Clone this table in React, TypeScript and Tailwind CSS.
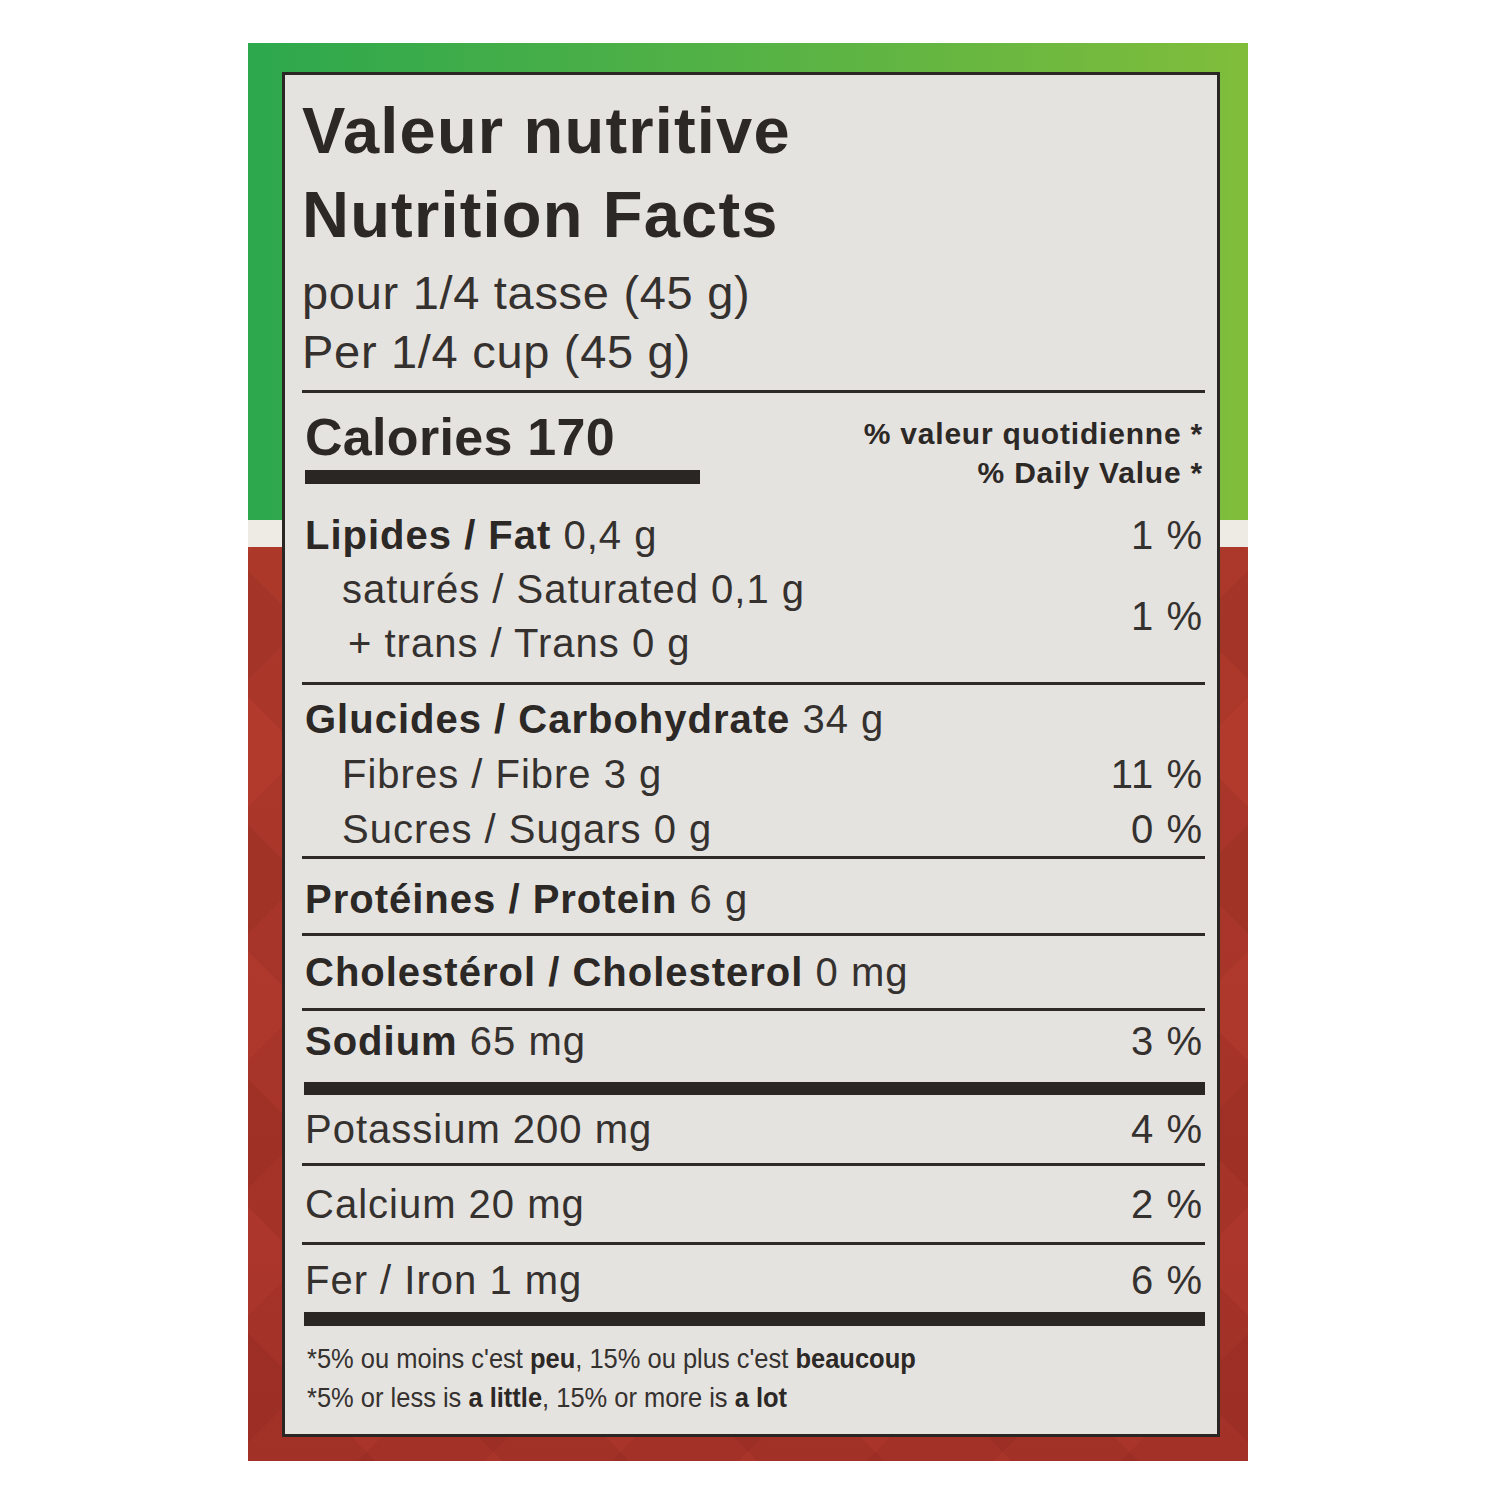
export default function App() {
  return (
    <div className="min-h-[1500px] w-[1500px] bg-white pl-[248px] pt-[43px]">
      <div className="h-[1418px] w-[1000px] bg-[repeating-linear-gradient(45deg,rgba(60,0,0,0.07)_0_90px,transparent_90px_180px),repeating-linear-gradient(-45deg,rgba(60,0,0,0.06)_0_90px,transparent_90px_180px),linear-gradient(to_bottom,transparent_0,transparent_477px,#eeebe4_477px,#eeebe4_504px,#b43c2d_504px,#a9342a_100%),linear-gradient(to_right,#2da84d,#55b245_50%,#80bd3b)] bg-[length:100%_914px,100%_914px,100%_100%,100%_100%] bg-[position:bottom,bottom,top,top] bg-no-repeat pl-[34px] pt-[29px]">
        <div className="flex h-[1365px] w-[938px] flex-col border-[3px] border-[#2a2624] bg-[#e5e3e0] pl-[17px] pr-[12px] font-['Liberation_Sans',Arial,sans-serif] text-[#2c2826]">
          {/* title */}
          <div className="pt-[14px]">
            <p className="text-[65px] font-bold leading-[84px] tracking-[1.2px]">Valeur nutritive</p>
            <p className="text-[65px] font-bold leading-[84px] tracking-[1.2px]">Nutrition Facts</p>
          </div>
          <div className="mt-[6px] text-[47px] leading-[59px] tracking-[0.7px] text-[#35312f]">
            <p>pour 1/4 tasse (45 g)</p>
            <p>Per 1/4 cup (45 g)</p>
          </div>
          <div className="mt-[9px] h-[3px] bg-[#2e2a28]" />

          {/* calories + daily value header */}
          <div className="flex h-[107px] justify-between pl-[3px] pr-[2px]">
            <div className="pt-[18px]">
              <p className="text-[52px] font-bold leading-[52px] tracking-[0.3px]">Calories 170</p>
              <div className="mt-[7px] h-[14px] w-[395px] bg-[#2a2624]" />
            </div>
            <div className="pt-[21px] text-right text-[30px] font-bold leading-[39px] tracking-[0.8px]">
              <p>% valeur quotidienne *</p>
              <p>% Daily Value *</p>
            </div>
          </div>

          {/* fat */}
          <div className="grid grid-cols-[1fr_auto] grid-rows-[54px_54px_54px] pb-[12px] pl-[3px] pr-[2px] pt-[8px] text-[40px] leading-[40px] tracking-[1px]">
            <p className="self-center">
              <span className="font-bold">Lipides / Fat</span> <span className="text-[#35312f]">0,4 g</span>
            </p>
            <p className="self-center text-right text-[#35312f]">1 %</p>
            <p className="self-center pl-[37px] text-[#35312f]">saturés / Saturated 0,1 g</p>
            <p className="row-span-2 self-center text-right text-[#35312f]">1 %</p>
            <p className="self-center pl-[43px] text-[#35312f]">+ trans / Trans 0 g</p>
          </div>
          <div className="h-[3px] bg-[#2e2a28]" />

          {/* carbohydrate */}
          <div className="grid grid-cols-[1fr_auto] grid-rows-[55px_55px_55px] pl-[3px] pr-[2px] pt-[6px] text-[40px] leading-[40px] tracking-[1px] text-[#35312f]">
            <p className="col-span-2 self-center">
              <span className="font-bold text-[#2c2826]">Glucides / Carbohydrate</span> 34 g
            </p>
            <p className="self-center pl-[37px]">Fibres / Fibre 3 g</p>
            <p className="self-center text-right">11 %</p>
            <p className="self-center pl-[37px]">Sucres / Sugars 0 g</p>
            <p className="self-center text-right">0 %</p>
          </div>
          <div className="h-[3px] bg-[#2e2a28]" />

          <div className="mt-[6px] flex h-[68px] items-center pl-[3px] text-[40px] leading-[40px] tracking-[1px] text-[#35312f]">
            <p>
              <span className="font-bold text-[#2c2826]">Protéines / Protein</span> 6 g
            </p>
          </div>
          <div className="h-[3px] bg-[#2e2a28]" />

          <div className="flex h-[72px] items-center pl-[3px] text-[40px] leading-[40px] tracking-[1px] text-[#35312f]">
            <p>
              <span className="font-bold text-[#2c2826]">Cholestérol / Cholesterol</span> 0 mg
            </p>
          </div>
          <div className="h-[3px] bg-[#2e2a28]" />

          <div className="mb-[11px] flex h-[60px] items-center justify-between pl-[3px] pr-[2px] text-[40px] leading-[40px] tracking-[1px] text-[#35312f]">
            <p>
              <span className="font-bold text-[#2c2826]">Sodium</span> 65 mg
            </p>
            <p>3 %</p>
          </div>
          <div className="ml-[2px] h-[13px] bg-[#2a2624]" />

          <div className="flex h-[68px] items-center justify-between pl-[3px] pr-[2px] text-[40px] leading-[40px] tracking-[1px] text-[#35312f]">
            <p>Potassium 200 mg</p>
            <p>4 %</p>
          </div>
          <div className="h-[3px] bg-[#2e2a28]" />

          <div className="flex h-[76px] items-center justify-between pl-[3px] pr-[2px] text-[40px] leading-[40px] tracking-[1px] text-[#35312f]">
            <p>Calcium 20 mg</p>
            <p>2 %</p>
          </div>
          <div className="h-[3px] bg-[#2e2a28]" />

          <div className="mt-[3px] flex h-[64px] items-center justify-between pl-[3px] pr-[2px] text-[40px] leading-[40px] tracking-[1px] text-[#35312f]">
            <p>Fer / Iron 1 mg</p>
            <p>6 %</p>
          </div>
          <div className="ml-[2px] h-[14px] bg-[#2a2624]" />

          {/* footnote, condensed like the printed label */}
          <div className="pl-[5px] pt-[13px] text-[28px] leading-[39px] text-[#35312f]">
            <p className="origin-left scale-x-[0.91]">
              *5% ou moins c'est <span className="font-bold text-[#2c2826]">peu</span>, 15% ou plus c'est{" "}
              <span className="font-bold text-[#2c2826]">beaucoup</span>
            </p>
            <p className="origin-left scale-x-[0.91]">
              *5% or less is <span className="font-bold text-[#2c2826]">a little</span>, 15% or more is{" "}
              <span className="font-bold text-[#2c2826]">a lot</span>
            </p>
          </div>
        </div>
      </div>
    </div>
  );
}
